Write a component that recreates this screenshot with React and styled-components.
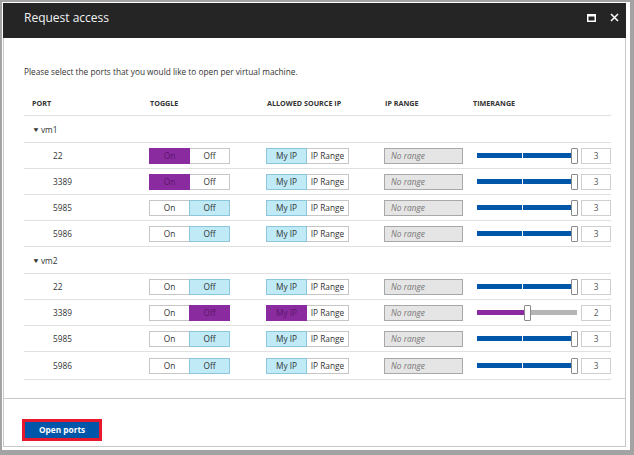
import React from 'react'
import styled, { createGlobalStyle } from 'styled-components'

const GlobalStyle = createGlobalStyle`
  body {
    margin: 0;
    background: #a3a3a3;
    font-family: 'Open Sans', 'Noto Sans', sans-serif;
  }
`

const groups = [
  {
    name: 'vm1',
    rows: [
      { port: '22', on: true, color: 'purple', ipColor: 'cyan', value: 3 },
      { port: '3389', on: true, color: 'purple', ipColor: 'cyan', value: 3 },
      { port: '5985', on: false, color: 'cyan', ipColor: 'cyan', value: 3 },
      { port: '5986', on: false, color: 'cyan', ipColor: 'cyan', value: 3 },
    ],
  },
  {
    name: 'vm2',
    rows: [
      { port: '22', on: false, color: 'cyan', ipColor: 'cyan', value: 3 },
      { port: '3389', on: false, color: 'purple', ipColor: 'purple', value: 2 },
      { port: '5985', on: false, color: 'cyan', ipColor: 'cyan', value: 3 },
      { port: '5986', on: false, color: 'cyan', ipColor: 'cyan', value: 3 },
    ],
  },
]

function Toggle({ on, color }) {
  return (
    <Segmented>
      <Seg $w={41} $state={on ? color : 'none'}>On</Seg>
      <Seg $w={41} $state={on ? 'none' : color}>Off</Seg>
    </Segmented>
  )
}

function Slider({ value, purple }) {
  const pct = (value - 1) / 2
  return (
    <SliderBox>
      <Track>
        <Fill $purple={purple} style={{ width: `${pct * 100}%` }} />
        {value === 3 && <Tick />}
      </Track>
      <Thumb style={{ left: `${Math.round(pct * 94)}px` }} />
    </SliderBox>
  )
}

function Row({ row }) {
  const purple = row.color === 'purple' && !row.on
  return (
    <GridRow>
      <PortCell>{row.port}</PortCell>
      <Cell>
        <Toggle on={row.on} color={row.color} />
      </Cell>
      <Cell>
        <Segmented>
          <Seg $w={41} $state={row.ipColor}>My IP</Seg>
          <Seg $w={43} $state="none">IP Range</Seg>
        </Segmented>
      </Cell>
      <Cell>
        <RangeInput>No range</RangeInput>
      </Cell>
      <TimeCell>
        <Slider value={row.value} purple={purple} />
        <ValueBox>{row.value}</ValueBox>
      </TimeCell>
    </GridRow>
  )
}

export default function App() {
  return (
    <>
      <GlobalStyle />
      <Window>
        <Blade>
          <Header>
            <Title>Request access</Title>
            <HeaderIcons>
              <svg width="9" height="8" viewBox="0 0 9 8">
                <rect x="0.75" y="0.75" width="7.5" height="6.5" fill="none" stroke="#fff" strokeWidth="1.5" />
                <rect x="0" y="0" width="9" height="2.5" fill="#fff" />
              </svg>
              <svg width="9" height="9" viewBox="0 0 9 9">
                <path d="M1 1 L8 8 M8 1 L1 8" stroke="#fff" strokeWidth="1.5" />
              </svg>
            </HeaderIcons>
          </Header>
          <Content>
            <Description>Please select the ports that you would like to open per virtual machine.</Description>
            <Table>
              <HeadRow>
                <HeadCell $pad={8}>PORT</HeadCell>
                <HeadCell>TOGGLE</HeadCell>
                <HeadCell>ALLOWED SOURCE IP</HeadCell>
                <HeadCell>IP RANGE</HeadCell>
                <HeadCell>TIMERANGE</HeadCell>
              </HeadRow>
              {groups.map((g) => (
                <React.Fragment key={g.name}>
                  <GroupRow>
                    <Caret>▼</Caret>
                    {g.name}
                  </GroupRow>
                  {g.rows.map((r) => (
                    <Row key={g.name + r.port} row={r} />
                  ))}
                </React.Fragment>
              ))}
            </Table>
          </Content>
          <Footer>
            <OpenButton>Open ports</OpenButton>
          </Footer>
        </Blade>
      </Window>
    </>
  )
}

const Window = styled.div`
  width: 628px;
  height: 448px;
  margin: 2px 0 0 2px;
  background: #ffffff;
  display: flex;
`

const Blade = styled.div`
  box-sizing: border-box;
  width: 623px;
  height: 444px;
  margin: 1px 4px 3px 1px;
  border: 1px solid #c8c8c8;
  border-top: none;
  display: flex;
  flex-direction: column;
`

const Header = styled.header`
  height: 35px;
  box-sizing: border-box;
  margin: 0 -1px;
  background: #252526;
  display: flex;
  align-items: center;
  padding: 0 6px 6px 21px;
`

const Title = styled.div`
  flex: 1;
  color: #f2f2f2;
  font-size: 12px;
`

const HeaderIcons = styled.div`
  display: flex;
  align-items: center;
  gap: 14px;
  padding-right: 1px;
`

const Content = styled.div`
  flex: 1;
  padding: 27px 14px 0 20px;
`

const Description = styled.div`
  font-size: 8.3px;
  line-height: 14px;
  color: #333;
`

const Table = styled.div`
  margin-top: 11px;
  width: 587px;
`

const columns = '125px 117px 118px 88px 139px'

const HeadRow = styled.div`
  display: grid;
  grid-template-columns: ${columns};
  align-items: center;
  height: 25px;
  border-bottom: 1px solid #e0e0e0;
`

const HeadCell = styled.div`
  font-size: 7.2px;
  font-weight: 700;
  color: #333;
  padding-left: ${(p) => p.$pad || 1}px;
`

const GroupRow = styled.div`
  display: flex;
  align-items: center;
  height: 26px;
  padding-left: 8px;
  border-bottom: 1px solid #e0e0e0;
  font-size: 8.3px;
  color: #333;
`

const Caret = styled.span`
  font-size: 8px;
  margin-right: 1px;
  transform: scaleY(0.8);
`

const GridRow = styled.div`
  display: grid;
  grid-template-columns: ${columns};
  align-items: center;
  height: 25px;
  border-bottom: 1px solid #e0e0e0;
  &:last-child {
    height: 27px;
  }
`

const Cell = styled.div`
  display: flex;
  align-items: center;
`

const PortCell = styled.div`
  padding-left: 29px;
  font-size: 8.3px;
  color: #333;
`

const Segmented = styled.div`
  display: flex;
  height: 16px;
`

const segColors = {
  none: { bg: '#ffffff', border: '#c6c6c6', color: '#333' },
  cyan: { bg: '#bfeaf6', border: '#8cc6da', color: '#333' },
  purple: { bg: '#8a2b9f', border: '#8a2b9f', color: '#5a1669' },
}

const Seg = styled.div`
  box-sizing: border-box;
  position: relative;
  z-index: ${(p) => (p.$state === 'none' ? 0 : 1)};
  width: ${(p) => p.$w}px;
  height: 16px;
  display: flex;
  align-items: center;
  justify-content: center;
  font-size: 8.3px;
  background: ${(p) => segColors[p.$state].bg};
  border: 1px solid ${(p) => segColors[p.$state].border};
  color: ${(p) => segColors[p.$state].color};
  & + & {
    margin-left: -1px;
  }
`

const RangeInput = styled.div`
  box-sizing: border-box;
  width: 79px;
  height: 16px;
  background: #e5e5e5;
  border: 1px solid #a8a8a8;
  font-size: 8.3px;
  font-style: italic;
  color: #777;
  display: flex;
  align-items: center;
  padding-left: 6px;
`

const TimeCell = styled.div`
  display: flex;
  align-items: center;
  padding-left: 5px;
`

const SliderBox = styled.div`
  position: relative;
  width: 101px;
  height: 16px;
  display: flex;
  align-items: center;
`

const Track = styled.div`
  position: relative;
  width: 100px;
  height: 5px;
  background: #b5b5b5;
`

const Fill = styled.div`
  height: 100%;
  background: ${(p) => (p.$purple ? '#8a2b9f' : '#0057aa')};
`

const Tick = styled.div`
  position: absolute;
  left: 45px;
  top: 0;
  width: 1px;
  height: 100%;
  background: #ffffff;
`

const Thumb = styled.div`
  position: absolute;
  top: 0;
  box-sizing: border-box;
  width: 7px;
  height: 16px;
  background: #fff;
  border: 1px solid #8a8a8a;
  border-radius: 1px;
`

const ValueBox = styled.div`
  box-sizing: border-box;
  margin-left: 3px;
  width: 30px;
  height: 16px;
  border: 1px solid #cfcfcf;
  font-size: 8.3px;
  color: #555;
  display: flex;
  align-items: center;
  justify-content: center;
`

const Footer = styled.footer`
  height: 48px;
  box-sizing: border-box;
  border-top: 1px solid #c8c8c8;
  padding: 17px 0 0 18px;
`

const OpenButton = styled.button`
  box-sizing: border-box;
  width: 80px;
  height: 22px;
  border: 3px solid #e8192c;
  background: #0057aa;
  color: #fff;
  font-family: 'Open Sans', 'Noto Sans', sans-serif;
  font-size: 8.3px;
  font-weight: 700;
  padding: 0;
`
